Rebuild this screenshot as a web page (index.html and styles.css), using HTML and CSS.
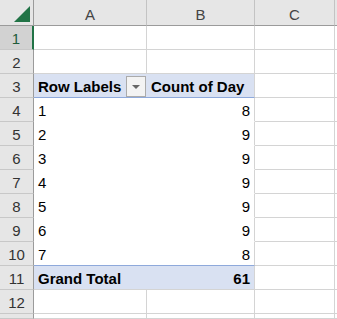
FILE: index.html
```html
<!DOCTYPE html>
<html>
<head>
<meta charset="utf-8">
<title>Pivot</title>
<link rel="stylesheet" href="styles.css">
</head>
<body>
<div class="sheet">
	<!-- 列头 -->
	<div class="corner"><span class="tri"></span></div>
	<div class="colhd">A</div>
	<div class="colhd">B</div>
	<div class="colhd">C</div>
	<div class="colhd last"></div>

	<div class="rowhd sel">1</div><div class="cell"></div><div class="cell"></div><div class="cell"></div><div class="cell"></div>
	<div class="rowhd">2</div><div class="cell"></div><div class="cell"></div><div class="cell"></div><div class="cell"></div>

	<div class="rowhd">3</div>
	<div class="cell pv head a">Row Labels <span class="drop"><i></i></span></div>
	<div class="cell pv head b">Count of Day</div>
	<div class="cell"></div><div class="cell"></div>

	<div class="rowhd">4</div><div class="cell pv a">1</div><div class="cell pv b">8</div><div class="cell"></div><div class="cell"></div>
	<div class="rowhd">5</div><div class="cell pv a">2</div><div class="cell pv b">9</div><div class="cell"></div><div class="cell"></div>
	<div class="rowhd">6</div><div class="cell pv a">3</div><div class="cell pv b">9</div><div class="cell"></div><div class="cell"></div>
	<div class="rowhd">7</div><div class="cell pv a">4</div><div class="cell pv b">9</div><div class="cell"></div><div class="cell"></div>
	<div class="rowhd">8</div><div class="cell pv a">5</div><div class="cell pv b">9</div><div class="cell"></div><div class="cell"></div>
	<div class="rowhd">9</div><div class="cell pv a">6</div><div class="cell pv b">9</div><div class="cell"></div><div class="cell"></div>
	<div class="rowhd">10</div><div class="cell pv a end">7</div><div class="cell pv b end">8</div><div class="cell"></div><div class="cell"></div>

	<div class="rowhd">11</div>
	<div class="cell pv total a">Grand Total</div>
	<div class="cell pv total b">61</div>
	<div class="cell"></div><div class="cell"></div>

	<div class="rowhd">12</div><div class="cell"></div><div class="cell"></div><div class="cell"></div><div class="cell"></div>
	<div class="rowhd"></div><div class="cell"></div><div class="cell"></div><div class="cell"></div><div class="cell"></div>
</div>
</body>
</html>
```

FILE: styles.css
```css
*{ margin:0; padding:0; box-sizing:border-box;}
body{ font:15px/21px "Liberation Sans",Arial,sans-serif; color:#000; background:#fff; overflow:hidden;}

.sheet{ display:grid; grid-template-columns:34px 113px 108px 80px 2px; grid-template-rows:26px repeat(12,24px) 5px; width:337px; height:319px; overflow:hidden;}

/* 表头 */
.corner{ background:#e6e6e6; border-right:1px solid #9b9b9b; border-bottom:1px solid #9b9b9b; position:relative;}
.tri{ position:absolute; left:14px; top:6px; width:0; height:0; border-left:16px solid transparent; border-bottom:16px solid #217346;}
.colhd{ background:#e6e6e6; color:#444; text-align:center; padding-top:4px; border-right:1px solid #c3c3c3; border-bottom:1px solid #9b9b9b;}
.colhd.last{ border-right:none;}
.rowhd{ background:#e6e6e6; color:#333; text-align:center; padding-top:2px; border-right:1px solid #9b9b9b; border-bottom:1px solid #c8c8c8;}
.rowhd.sel{ background:#d2d2d2; color:#1f5c3a; border-right:2px solid #217346;}

/* 单元格 */
.cell{ border-right:1px solid #d4d4d4; border-bottom:1px solid #d4d4d4; padding:2px 4px 0; white-space:nowrap; overflow:hidden;}

/* 数据透视表 */
.pv.a{ border-right:none;}
.pv{ border-bottom-color:transparent;}
.pv.b{ text-align:right;}
.pv.head.b{ text-align:left;}
.head, .total{ background:#d9e1f2; font-weight:bold;}
.head, .pv.end{ border-bottom-color:#8ea9db;}
.total{ border-bottom-color:#d4d4d4;}
.head.a{ display:flex; justify-content:space-between; align-items:flex-start; padding-right:1px;}
.drop{ display:flex; align-items:center; justify-content:center; width:20px; height:21px; background:#f3f3f3; border:1px solid #ababab;}
.drop i{ width:0; height:0; border-left:4px solid transparent; border-right:4px solid transparent; border-top:4px solid #666;}
```
